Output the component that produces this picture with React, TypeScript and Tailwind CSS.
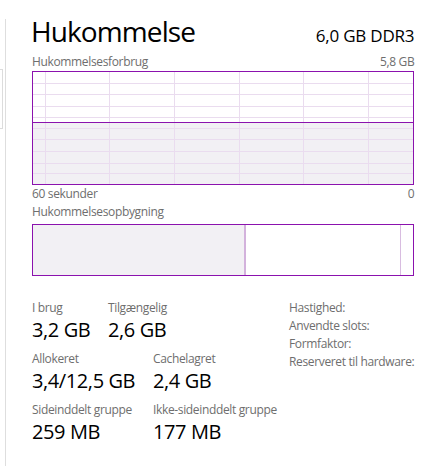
const PURPLE = "#8b12ae";

const vLines = [13, 77, 142, 207, 271, 336];
const hLines = [12, 23, 35, 46, 57, 68, 80, 92, 102];

const UsageGraph = () => {
  return (
    <svg width="382" height="114" viewBox="0 0 382 114" className="block">
      <rect x="0" y="0" width="382" height="114" fill="#ffffff" />
      {/* memory in use */}
      <rect x="1" y="52" width="380" height="61" fill="#f2f0f4" />
      {vLines.map((x) => (
        <line key={"v" + x} x1={x + 0.5} y1="1" x2={x + 0.5} y2="113" stroke="#eadcef" strokeWidth="1" />
      ))}
      {hLines.map((y) => (
        <line key={"h" + y} x1="1" y1={y + 0.5} x2="381" y2={y + 0.5} stroke="#eadcef" strokeWidth="1" />
      ))}
      <line x1="1" y1="51.5" x2="381" y2="51.5" stroke={PURPLE} strokeWidth="1" />
      <rect x="0.5" y="0.5" width="381" height="113" fill="none" stroke={PURPLE} strokeWidth="1" />
    </svg>
  );
};

const Stat = ({ label, value, width }: { label: string; value: string; width: string }) => {
  return (
    <div className={width}>
      <div className="text-[12px] leading-[16px] tracking-[-0.35px] text-[#6e6e6e] whitespace-nowrap">{label}</div>
      <div className="text-[20px] leading-[28px] tracking-[-0.4px] text-black whitespace-nowrap">{value}</div>
    </div>
  );
};

const App = () => {
  return (
    <div className="flex w-[427px] h-[466px] bg-white overflow-hidden" style={{ fontFamily: '"Open Sans", "Noto Sans", sans-serif' }}>
      {/* edge of the side list */}
      <div className="w-[5px] shrink-0">
        <div className="mt-[69px] h-[60px] w-[3px] border-t border-r border-b border-[#dcdcdc]" />
      </div>

      <div className="mt-[19px] h-[447px] flex-1 border-l border-[#dedede] pl-[26px] pr-[13px]">
        <div className="-mt-[3px] flex items-baseline justify-between">
          <h1 className="-ml-[1px] text-[28px] leading-[30px] text-black tracking-[-0.9px]">Hukommelse</h1>
          <span className="text-[17px] leading-[20px] text-black tracking-[-0.2px]">6,0 GB DDR3</span>
        </div>

        <div className="mt-[8px] flex justify-between text-[12px] leading-[16px] tracking-[-0.35px] text-[#6e6e6e]">
          <span>Hukommelsesforbrug</span>
          <span>5,8 GB</span>
        </div>
        <div className="mt-[1px]">
          <UsageGraph />
        </div>
        <div className="mt-[1px] flex justify-between text-[12px] leading-[16px] tracking-[-0.35px] text-[#6e6e6e]">
          <span>60 sekunder</span>
          <span>0</span>
        </div>

        <div className="mt-[2px] text-[12px] leading-[16px] tracking-[-0.35px] text-[#6e6e6e]">Hukommelsesopbygning</div>
        <div className="mt-[4px] flex h-[52px] w-[382px] border border-[#8b12ae]">
          <div className="w-[211px] bg-[#f2f0f4]" />
          <div className="w-[2px] bg-[#d3b2dc]" />
          <div className="w-[154px]" />
          <div className="w-[1px] bg-[#d8bce0]" />
          <div className="flex-1" />
        </div>

        <div className="mt-[24px] flex">
          <div className="flex w-[257px] flex-col gap-[7px]">
            <div className="flex">
              <Stat label="I brug" value="3,2 GB" width="w-[76px]" />
              <Stat label="Tilgængelig" value="2,6 GB" width="w-[100px]" />
            </div>
            <div className="flex">
              <Stat label="Allokeret" value="3,4/12,5 GB" width="w-[121px]" />
              <Stat label="Cachelagret" value="2,4 GB" width="w-[120px]" />
            </div>
            <div className="flex">
              <Stat label="Sideinddelt gruppe" value="259 MB" width="w-[121px]" />
              <Stat label="Ikke-sideinddelt gruppe" value="177 MB" width="w-[130px]" />
            </div>
          </div>
          <div className="-mt-[1px] flex flex-col text-[12px] leading-[18px] tracking-[-0.35px] text-[#6e6e6e] whitespace-nowrap">
            <span>Hastighed:</span>
            <span>Anvendte slots:</span>
            <span>Formfaktor:</span>
            <span>Reserveret til hardware:</span>
          </div>
        </div>
      </div>
    </div>
  );
};

export default App;
